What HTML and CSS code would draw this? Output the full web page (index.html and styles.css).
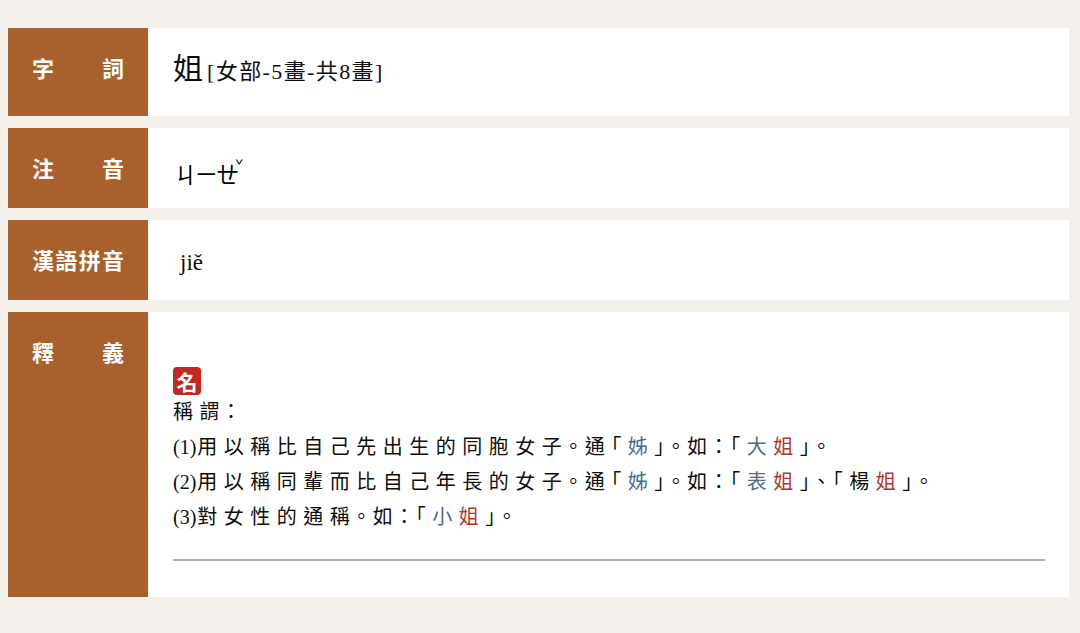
FILE: index.html
```html
<!DOCTYPE html>
<html lang="zh-Hant">
<head>
<meta charset="utf-8">
<title>姐</title>
<link rel="stylesheet" href="styles.css">
</head>
<body>
<main class="entry">
  <section class="row">
    <h2 class="label"><span>字</span><span>詞</span></h2>
    <div class="content word">
      <span class="char">姐</span> <span class="radical">[女部-5畫-共8畫]</span>
    </div>
  </section>
  <section class="row">
    <h2 class="label"><span>注</span><span>音</span></h2>
    <div class="content zhuyin">ㄐㄧㄝ<span class="tone">ˇ</span></div>
  </section>
  <section class="row">
    <h2 class="label"><span>漢</span><span>語</span><span>拼</span><span>音</span></h2>
    <div class="content pinyin">jiě</div>
  </section>
  <section class="row">
    <h2 class="label"><span>釋</span><span>義</span></h2>
    <div class="content defs">
      <div class="pos"><span class="badge">名</span></div>
      <p class="def-head">稱謂：</p>
      <ol class="def-list">
        <li><span class="num">(1)</span>用以稱比自己先出生的同胞女子。通「<span class="blue">姊</span>」。如：「<span class="blue">大</span><span class="red">姐</span>」。</li>
        <li><span class="num">(2)</span>用以稱同輩而比自己年長的女子。通「<span class="blue">姊</span>」。如：「<span class="blue">表</span><span class="red">姐</span>」、「楊<span class="red">姐</span>」。</li>
        <li><span class="num">(3)</span>對女性的通稱。如：「<span class="blue">小</span><span class="red">姐</span>」。</li>
      </ol>
      <hr class="rule">
    </div>
  </section>
</main>
</body>
</html>
```
FILE: styles.css
```css
html, body {
  margin: 0;
  padding: 0;
  background: #f4f1ec;
}
body {
  padding: 28px 0 0 8px;
  font-family: "Liberation Serif", "Noto Sans CJK TC", serif;
  color: #0d0d0d;
}
.entry {
  width: 1061px;
  display: flex;
  flex-direction: column;
  gap: 12px;
}
.row {
  display: flex;
  align-items: stretch;
}
.label {
  flex: none;
  width: 140px;
  box-sizing: border-box;
  margin: 0;
  padding: 27px 24px 0 24px;
  background: #a8612c;
  color: #fff;
  font-family: "Noto Sans CJK TC", sans-serif;
  font-weight: 700;
  font-size: 22px;
  line-height: 25px;
  display: flex;
  justify-content: space-between;
  align-items: flex-start;
}
.content {
  flex: 1;
  background: #fff;
  padding: 0 24px 0 25px;
}
.word {
  padding-top: 26px;
  padding-bottom: 26px;
  line-height: 36px;
  height: 88px;
  box-sizing: border-box;
}
.char {
  font-size: 30px;
  line-height: 1;
}
.radical {
  font-size: 22px;
  letter-spacing: 1.4px;
  line-height: 1;
}
.zhuyin {
  font-family: "Noto Sans CJK TC", sans-serif;
  font-size: 23px;
  letter-spacing: -2px;
  line-height: 24px;
  padding-top: 33px;
  padding-bottom: 23px;
  padding-left: 26px;
  height: 80px;
  box-sizing: border-box;
  color: #000;
}
.tone {
  font-size: 14px;
  line-height: 0;
  vertical-align: 12px;
  margin-left: -2px;
}
.pinyin {
  font-size: 23px;
  line-height: 24px;
  padding-top: 31px;
  padding-bottom: 25px;
  padding-left: 32px;
  height: 80px;
  box-sizing: border-box;
}
.defs {
  padding-top: 55px;
  padding-bottom: 36px;
  font-size: 20px;
  line-height: 35px;
}
.pos {
  height: 28px;
  display: flex;
}
.badge {
  width: 28px;
  height: 28px;
  border-radius: 4px;
  background: #c02a22;
  color: #fff;
  font-family: "Noto Sans CJK TC", sans-serif;
  font-weight: 700;
  font-size: 21px;
  line-height: 28px;
  text-align: center;
}
.def-head {
  margin: 0;
  letter-spacing: 6.5px;
  font-feature-settings: "halt";
}
.def-list {
  list-style: none;
  margin: 0;
  padding: 0;
  letter-spacing: 6.5px;
  font-feature-settings: "halt";
}
.num {
  letter-spacing: 0;
  margin-right: 1px;
}
.blue {
  color: #4d6b8e;
}
.red {
  color: #b3362c;
}
.rule {
  margin: 24px 0 0 0;
  border: 0;
  border-top: 2px solid #aeaeae;
  height: 0;
}
```
